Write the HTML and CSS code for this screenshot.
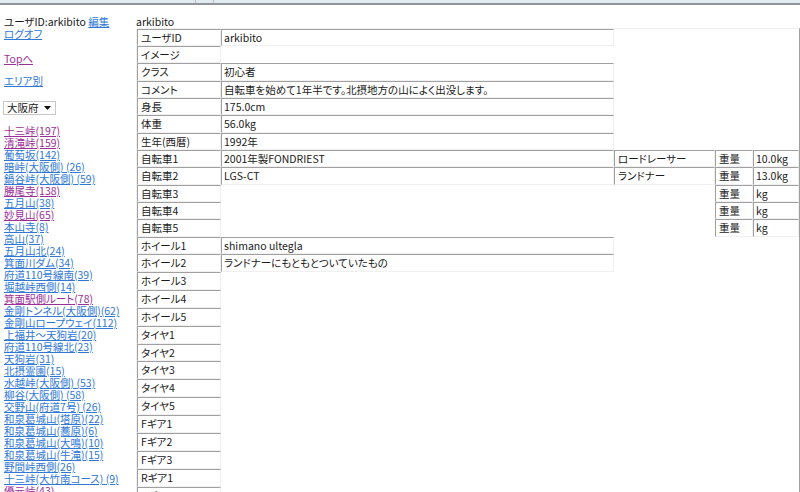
FILE: index.html
```html
<!DOCTYPE html>
<html lang="ja">
<head>
<meta charset="utf-8">
<title>arkibito</title>
<link rel="stylesheet" href="styles.css">
</head>
<body>
<div class="chrome"><span class="tab"></span></div>
<div class="page">
  <aside class="side">
    <div class="line">ユーザID:arkibito <a href="#" class="link">編集</a></div>
    <div class="line"><a href="#" class="link">ログオフ</a></div>
    <div class="line gap-top"><a href="#" class="visited">Topへ</a></div>
    <div class="line gap-area"><a href="#" class="link">エリア別</a></div>
    <div class="select"><span>大阪府</span><svg class="arrow" width="7" height="4" viewBox="0 0 7 4"><path d="M0 0H7L3.5 4Z" fill="#111"/></svg></div>
    <ul class="spots">
      <li><a href="#" class="visited">十三峠(197)</a></li>
      <li><a href="#" class="visited">清滝峠(159)</a></li>
      <li><a href="#" class="link">葡萄坂(142)</a></li>
      <li><a href="#" class="link">暗峠(大阪側) (26)</a></li>
      <li><a href="#" class="link">鍋谷峠(大阪側) (59)</a></li>
      <li><a href="#" class="visited">勝尾寺(138)</a></li>
      <li><a href="#" class="link">五月山(38)</a></li>
      <li><a href="#" class="visited">妙見山(65)</a></li>
      <li><a href="#" class="link">本山寺(8)</a></li>
      <li><a href="#" class="link">高山(37)</a></li>
      <li><a href="#" class="link">五月山北(24)</a></li>
      <li><a href="#" class="link">箕面川ダム(34)</a></li>
      <li><a href="#" class="link">府道110号線南(39)</a></li>
      <li><a href="#" class="link">堀越峠西側(14)</a></li>
      <li><a href="#" class="visited">箕面駅側ルート(78)</a></li>
      <li><a href="#" class="link">金剛トンネル(大阪側)(62)</a></li>
      <li><a href="#" class="link">金剛山ロープウェイ(112)</a></li>
      <li><a href="#" class="link">上福井～天狗岩(20)</a></li>
      <li><a href="#" class="link">府道110号線北(23)</a></li>
      <li><a href="#" class="link">天狗岩(31)</a></li>
      <li><a href="#" class="link">北摂霊園(15)</a></li>
      <li><a href="#" class="link">水越峠(大阪側) (53)</a></li>
      <li><a href="#" class="link">柳谷(大阪側) (58)</a></li>
      <li><a href="#" class="link">交野山(府道7号) (26)</a></li>
      <li><a href="#" class="link">和泉葛城山(塔原)(22)</a></li>
      <li><a href="#" class="link">和泉葛城山(蕎原)(6)</a></li>
      <li><a href="#" class="link">和泉葛城山(大鳴)(10)</a></li>
      <li><a href="#" class="link">和泉葛城山(牛滝)(15)</a></li>
      <li><a href="#" class="link">野間峠西側(26)</a></li>
      <li><a href="#" class="link">十三峠(大竹南コース) (9)</a></li>
      <li><a href="#" class="visited">優元峠(43)</a></li>
    </ul>
  </aside>
  <main class="main">
    <div class="line">arkibito</div>
    <table class="profile">
      <colgroup>
        <col class="c-label"><col class="c-value"><col class="c-type"><col class="c-wlabel"><col class="c-weight">
      </colgroup>
      <tr class="s"><td class="lab">ユーザID</td><td class="val">arkibito</td></tr>
      <tr class="s"><td class="lab">イメージ</td><td class="val"></td></tr>
      <tr><td class="lab">クラス</td><td class="val">初心者</td></tr>
      <tr class="s"><td class="lab">コメント</td><td class="val">自転車を始めて1年半です。北摂地方の山によく出没します。</td></tr>
      <tr class="s"><td class="lab">身長</td><td class="val">175.0cm</td></tr>
      <tr><td class="lab">体重</td><td class="val">56.0kg</td></tr>
      <tr class="s"><td class="lab">生年(西暦)</td><td class="val">1992年</td></tr>
      <tr class="s"><td class="lab">自転車1</td><td class="val">2001年製FONDRIEST</td><td class="lab">ロードレーサー</td><td class="lab">重量</td><td class="val">10.0kg</td></tr>
      <tr><td class="lab">自転車2</td><td class="val">LGS-CT</td><td class="lab">ランドナー</td><td class="lab">重量</td><td class="val">13.0kg</td></tr>
      <tr class="s"><td class="lab">自転車3</td><td></td><td></td><td class="lab">重量</td><td class="val">kg</td></tr>
      <tr class="s"><td class="lab">自転車4</td><td></td><td></td><td class="lab">重量</td><td class="val">kg</td></tr>
      <tr><td class="lab">自転車5</td><td></td><td></td><td class="lab">重量</td><td class="val">kg</td></tr>
      <tr class="s"><td class="lab">ホイール1</td><td class="val">shimano ultegla</td></tr>
      <tr><td class="lab">ホイール2</td><td class="val">ランドナーにもともとついていたもの</td></tr>
      <tr><td class="lab">ホイール3</td><td></td></tr>
      <tr><td class="lab">ホイール4</td><td></td></tr>
      <tr><td class="lab">ホイール5</td><td></td></tr>
      <tr><td class="lab">タイヤ1</td><td></td></tr>
      <tr class="s"><td class="lab">タイヤ2</td><td></td></tr>
      <tr><td class="lab">タイヤ3</td><td></td></tr>
      <tr><td class="lab">タイヤ4</td><td></td></tr>
      <tr><td class="lab">タイヤ5</td><td></td></tr>
      <tr><td class="lab">Fギア1</td><td></td></tr>
      <tr><td class="lab">Fギア2</td><td></td></tr>
      <tr><td class="lab">Fギア3</td><td></td></tr>
      <tr><td class="lab">Rギア1</td><td></td></tr>
      <tr><td class="lab">Rギア2</td><td></td></tr>
      <tr><td class="lab">Rギア3</td><td></td></tr>
    </table>
  </main>
</div>
</body>
</html>
```

FILE: styles.css
```css
html, body {
  margin: 0;
  padding: 0;
  background: #fff;
}
body {
  font-family: "Noto Sans CJK JP", "Liberation Sans", sans-serif;
  font-size: 10.5px;
  line-height: 12px;
  color: #1a1a1a;
  font-feature-settings: "palt";
  overflow: hidden;
}
.chrome {
  height: 3px;
  background: #e4eaf1;
  border-bottom: 2px solid #8f969e;
  position: relative;
}
.tab {
  position: absolute;
  left: 195px;
  top: 0;
  width: 17px;
  height: 3px;
  border-left: 1px solid #b8bec6;
  border-right: 1px solid #b8bec6;
}
.page {
  display: flex;
  align-items: flex-start;
  padding-top: 11px;
}
.side {
  width: 132px;
  padding-left: 4px;
  flex: none;
}
.line {
  height: 12px;
  white-space: nowrap;
}
.link {
  color: #2f78d6;
}
.visited {
  color: #9c2f98;
}
.gap-top {
  margin-top: 13px;
}
.gap-area {
  margin-top: 10px;
}
.select {
  margin-top: 14px;
  margin-left: -1px;
  width: 44px;
  height: 12px;
  border: 1px solid #c8c8c8;
  display: flex;
  align-items: center;
  justify-content: space-between;
  padding: 0 4px 0 3px;
  box-sizing: content-box;
}
.arrow {
  display: block;
}
.spots {
  list-style: none;
  margin: 10px 0 0;
  padding: 0;
}
.spots li {
  height: 12px;
  white-space: nowrap;
}
.main {
  flex: 1;
}
.profile {
  table-layout: fixed;
  width: 664px;
  border-collapse: separate;
  border-spacing: 0;
  border: 1px solid;
  border-color: #f0f0f0 #a0a0a0 #a0a0a0 #f0f0f0;
  empty-cells: hide;
}
.c-label { width: 84px; }
.c-value { width: 393px; }
.c-type { width: 101px; }
.c-wlabel { width: 38px; }
.c-weight { width: 46px; }
.profile tr {
  height: 18px;
}
.profile tr.s {
  height: 17px;
}
.profile td {
  border: 1px solid;
  border-color: #a0a0a0 #f0f0f0 #f0f0f0 #a0a0a0;
  padding: 0 1px;
  vertical-align: middle;
  white-space: nowrap;
  overflow: hidden;
}
.profile td.lab {
  padding-left: 3px;
}
.profile td.val {
  padding-left: 2px;
}
```
